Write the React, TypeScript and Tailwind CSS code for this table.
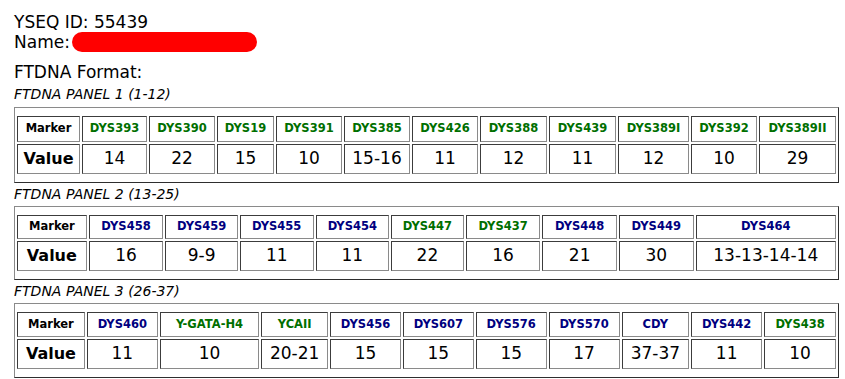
import React from 'react';

type Marker = { name: string; value: string; w: number; green?: boolean };

const GREEN = 'text-[#006f00]';
const NAVY = 'text-[#000080]';

const panels: { title: string; headH: string; valH: string; markerW: number; markers: Marker[] }[] = [
    {
        title: 'FTDNA PANEL 1 (1-12)',
        headH: 'h-[26px]',
        valH: 'h-[30px]',
        markerW: 63,
        markers: [
            { name: 'DYS393', value: '14', w: 65, green: true },
            { name: 'DYS390', value: '22', w: 66, green: true },
            { name: 'DYS19', value: '15', w: 57, green: true },
            { name: 'DYS391', value: '10', w: 66, green: true },
            { name: 'DYS385', value: '15-16', w: 66, green: true },
            { name: 'DYS426', value: '11', w: 66, green: true },
            { name: 'DYS388', value: '12', w: 67, green: true },
            { name: 'DYS439', value: '11', w: 67, green: true },
            { name: 'DYS389I', value: '12', w: 71, green: true },
            { name: 'DYS392', value: '10', w: 66, green: true },
            { name: 'DYS389II', value: '29', w: 77, green: true },
        ],
    },
    {
        title: 'FTDNA PANEL 2 (13-25)',
        headH: 'h-[24px]',
        valH: 'h-[30px]',
        markerW: 70,
        markers: [
            { name: 'DYS458', value: '16', w: 75 },
            { name: 'DYS459', value: '9-9', w: 73 },
            { name: 'DYS455', value: '11', w: 74 },
            { name: 'DYS454', value: '11', w: 74 },
            { name: 'DYS447', value: '22', w: 73, green: true },
            { name: 'DYS437', value: '16', w: 75, green: true },
            { name: 'DYS448', value: '21', w: 75 },
            { name: 'DYS449', value: '30', w: 75 },
            { name: 'DYS464', value: '13-13-14-14', w: 142 },
        ],
    },
    {
        title: 'FTDNA PANEL 3 (26-37)',
        headH: 'h-[25px]',
        valH: 'h-[30px]',
        markerW: 68,
        markers: [
            { name: 'DYS460', value: '11', w: 71 },
            { name: 'Y-GATA-H4', value: '10', w: 100, green: true },
            { name: 'YCAII', value: '20-21', w: 67, green: true },
            { name: 'DYS456', value: '15', w: 71 },
            { name: 'DYS607', value: '15', w: 71 },
            { name: 'DYS576', value: '15', w: 71 },
            { name: 'DYS570', value: '17', w: 71 },
            { name: 'CDY', value: '37-37', w: 68 },
            { name: 'DYS442', value: '11', w: 71 },
            { name: 'DYS438', value: '10', w: 72, green: true },
        ],
    },
];

// inset cell border like an old border=1 table
const cell = 'border border-t-[#3c3c3c] border-l-[#3c3c3c] border-r-[#8a8a8a] border-b-[#8a8a8a] p-0 text-center align-middle';

export default function App() {
    return (
        <div className="min-h-screen bg-white pl-[14px] pt-[12px] font-['DejaVu_Sans',sans-serif] text-black">
            <div className="text-[17px] leading-[20px]">YSEQ ID: 55439</div>
            <div className="flex items-center text-[17px] leading-[20px]">
                Name:
                <span className="ml-[2px] inline-block h-[20px] w-[185px] rounded-full bg-[#ff0000]" />
            </div>
            <div className="mt-[10px] text-[17px] leading-[20px]">FTDNA Format:</div>

            {panels.map((p, i) => (
                <div key={p.title}>
                    <div className={`${i === 0 ? 'mt-[4px]' : 'mt-[3px]'} text-[14px] italic leading-[17px]`}>{p.title}</div>
                    <div
                        className={`${i === 0 ? 'mt-[4px]' : 'mt-[3px]'} w-[825px] border border-t-[#8a8a8a] border-l-[#8a8a8a] border-r-[#2e2e2e] border-b-[#2e2e2e] py-[6px]`}
                    >
                        <table className="w-full border-separate border-spacing-[2px]">
                            <tbody>
                                <tr className={p.headH}>
                                    <td className={`${cell} text-[11.5px] font-bold`} style={{ width: p.markerW }}>
                                        Marker
                                    </td>
                                    {p.markers.map(m => (
                                        <td
                                            key={m.name}
                                            className={`${cell} text-[11.5px] font-bold ${m.green ? GREEN : NAVY}`}
                                            style={{ width: m.w }}
                                        >
                                            {m.name}
                                        </td>
                                    ))}
                                </tr>
                                <tr className={p.valH}>
                                    <td className={`${cell} text-[16px] font-bold`}>Value</td>
                                    {p.markers.map(m => (
                                        <td key={m.name} className={`${cell} text-[17px]`}>
                                            {m.value}
                                        </td>
                                    ))}
                                </tr>
                            </tbody>
                        </table>
                    </div>
                </div>
            ))}
        </div>
    );
}
